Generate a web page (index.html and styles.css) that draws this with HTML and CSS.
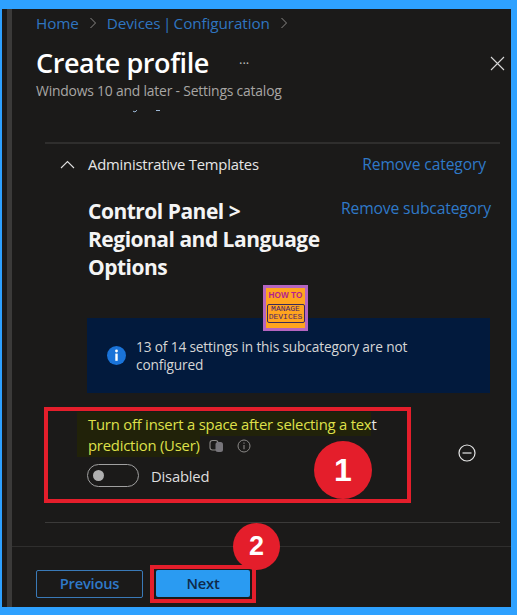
FILE: index.html
```html
<!DOCTYPE html>
<html lang="en">
<head>
<meta charset="utf-8">
<title>Create profile</title>
<link rel="stylesheet" href="styles.css">
</head>
<body>
<div class="frame">
  <div class="panel">
    <header class="header">
      <nav class="crumbs">
        <a>Home</a>
        <svg class="chev" width="8" height="12" viewBox="0 0 8 12"><path d="M1.5 1l5 5-5 5" fill="none" stroke="#8a8886" stroke-width="1"/></svg>
        <a>Devices | Configuration</a>
        <svg class="chev" width="8" height="12" viewBox="0 0 8 12"><path d="M1.5 1l5 5-5 5" fill="none" stroke="#8a8886" stroke-width="1"/></svg>
      </nav>
      <div class="title-row">
        <h1>Create profile</h1>
        <span class="more">···</span>
        <svg class="close" width="15" height="15" viewBox="0 0 15 15"><path d="M1 1l13 13M14 1L1 14" stroke="#d8d8d8" stroke-width="1.1" fill="none"/></svg>
      </div>
      <p class="subtitle">Windows 10 and later - Settings catalog</p>
      <svg class="cut-off" width="30" height="4" viewBox="0 0 30 4"><path d="M0 2.2q2 2 4-1M23 1.5h4" fill="none" stroke="#9db8d6" stroke-width="1"/></svg>
    </header>
    <main class="scroll">
      <div class="rule"></div>
      <div class="cat-row">
        <svg class="caret" width="15" height="9" viewBox="0 0 15 9"><path d="M1 8l6.5-6.5L14 8" fill="none" stroke="#e0e0e0" stroke-width="1.1"/></svg>
        <span class="cat-name">Administrative Templates</span>
        <a class="remove-cat">Remove category</a>
      </div>
      <div class="sub-row">
        <h2>Control Panel &gt;<br>Regional and Language<br>Options</h2>
        <a class="remove-sub">Remove subcategory</a>
      </div>
      <div class="info">
        <svg class="info-icon" width="19" height="19" viewBox="0 0 19 19"><circle cx="9.5" cy="9.5" r="9.5" fill="#1a73d8"/><circle cx="9.5" cy="5" r="1.4" fill="#fff"/><rect x="8.3" y="7.6" width="2.4" height="7.2" fill="#fff"/></svg>
        <p>13 of 14 settings in this subcategory are not configured</p>
      </div>
      <div class="setting">
        <div class="setting-main">
          <p class="setting-name"><span class="hl">Turn off insert a space after selecting a tex</span>t<br><span class="hl">prediction (User)</span>
            <svg class="copy" width="15" height="14" viewBox="0 0 15 14"><rect x="1" y="1.5" width="8" height="9.5" rx="2.5" fill="none" stroke="#8a8886" stroke-width="1.1"/><rect x="6.5" y="3" width="7.5" height="10" rx="2.5" fill="#77757a"/></svg>
            <svg class="tip" width="14" height="14" viewBox="0 0 14 14"><circle cx="7" cy="7" r="6" fill="none" stroke="#8a8886"/><path d="M7 6v4.2M7 3.6v1.2" stroke="#8a8886" stroke-width="1.1"/></svg>
          </p>
          <div class="toggle-row">
            <span class="toggle"><span class="knob"></span></span>
            <span class="toggle-label">Disabled</span>
          </div>
        </div>
        <svg class="minus" width="18" height="18" viewBox="0 0 18 18"><circle cx="9" cy="9" r="8" fill="none" stroke="#e6e6e6" stroke-width="1.2"/><path d="M4.5 9h9" stroke="#e6e6e6" stroke-width="1.2"/></svg>
      </div>
      <div class="rule-inner"></div>
    </main>
    <footer class="footer">
      <button class="btn btn-prev">Previous</button>
      <button class="btn btn-next">Next</button>
    </footer>
  </div>

  <div class="logo"><span class="logo-top">HOW TO</span><span class="logo-box">MANAGE<br>DEVICES</span></div>
  <div class="mark mark-one"></div>
  <div class="badge badge-one">1</div>
  <div class="mark mark-two"></div>
  <div class="badge badge-two">2</div>
</div>
</body>
</html>
```
FILE: styles.css
```css
* { box-sizing: border-box; }
html, body { margin: 0; padding: 0; }
body { width: 517px; height: 615px; overflow: hidden; font-family: "Open Sans", "Noto Sans", sans-serif; }
.frame { position: relative; width: 517px; height: 615px; background: #2ea1ff; padding: 9px 6px 8px 2px; }
.panel { height: 598px; background: #1b1a19; border-left: 5px solid #1b1a19; display: flex; flex-direction: column; position: relative; }
.panel::before { content: ""; position: absolute; left: 0; top: 0; bottom: 0; width: 5px; background: #3b3a39; }
.header { padding: 3px 0 0 29px; height: 131px; flex: none; }
.crumbs { display: flex; align-items: center; gap: 10px; height: 21px; font-size: 15.3px; color: #2f75c0; letter-spacing: -0.1px; word-spacing: -1.5px; }
.chev { flex: none; }
.title-row { display: flex; align-items: center; height: 44px; margin-top: 8px; position: relative; }
h1 { margin: 0; font-size: 27px; font-weight: 600; color: #fff; letter-spacing: -0.4px; line-height: 44px; }
.more { margin-left: 30px; color: #bdbdbd; font-size: 13px; line-height: 13px; }
.close { position: absolute; right: 6px; top: 15px; }
.subtitle { margin: -3px 0 0; font-size: 13.9px; line-height: 18px; color: #a8a6a4; letter-spacing: -0.2px; }
.cut-off { display: block; margin: 9px 0 0 97px; }
.scroll { flex: none; height: 383px; padding-left: 38px; padding-right: 11px; }
.rule { height: 2px; background: #2f2e2d; margin-top: 2px; }
.cat-row { display: flex; align-items: center; height: 40px; padding-left: 15px; }
.caret { flex: none; }
.cat-name { margin-left: 13px; font-size: 14.8px; color: #e6e6e6; letter-spacing: -0.2px; }
.remove-cat { margin-left: auto; margin-right: 14px; font-size: 15.6px; color: #2f79c8; letter-spacing: -0.1px; }
.sub-row { display: flex; justify-content: space-between; align-items: flex-start; padding: 13px 9px 0 43px; height: 134px; }
h2 { margin: 0; font-size: 21px; line-height: 28px; font-weight: 700; color: #f4f4f4; letter-spacing: -0.5px; white-space: nowrap; }
.remove-sub { font-size: 15.7px; color: #2f79c8; letter-spacing: -0.15px; }
.info { display: flex; align-items: center; background: #021a3d; height: 75px; margin: 0 10px 0 42px; padding-left: 20px; }
.info-icon { flex: none; }
.info p { margin: 0 0 0 10px; width: 335px; font-size: 13.7px; line-height: 18px; color: #d6d6d6; letter-spacing: -0.15px; }
.setting { display: flex; justify-content: space-between; padding: 21px 24px 0 43px; height: 129px; }
.setting-name { margin: 0; font-size: 14.8px; line-height: 21px; color: #e6e6e6; letter-spacing: -0.2px; white-space: nowrap; }
.hl { color: #dfe04a; background: #212209; padding: 2px 0 2px 11px; margin-left: -11px; }
.copy { margin-left: 6px; vertical-align: -2px; }
.tip { margin-left: 9px; vertical-align: -2px; }
.toggle-row { display: flex; align-items: center; margin: 8px 0 0 -1px; }
.toggle { width: 52px; height: 23px; border: 1px solid #a0a0a0; border-radius: 12px; display: flex; align-items: center; padding-left: 5px; }
.knob { width: 11px; height: 11px; border-radius: 50%; background: #b0b0b0; }
.toggle-label { margin-left: 12px; font-size: 14.8px; color: #dedede; letter-spacing: -0.2px; }
.minus { margin-top: 30px; flex: none; }
.rule-inner { height: 1px; background: #3b3a39; }
.footer { flex: none; border-top: 1px solid #2f2e2d; margin: 23px 0 0 5px; padding: 23px 0 0 24px; display: flex; gap: 13px; }
.btn { width: 107px; height: 28px; border-radius: 2px; font-family: inherit; font-size: 14.7px; font-weight: 600; padding: 0 0 2px; letter-spacing: -0.2px; }
.btn-prev { background: transparent; border: 1px solid #3a7ab8; color: #2f79c8; }
.btn-next { width: 94px; height: 27px; background: #2a9bf2; border: 0; color: #0f2a4a; }
.logo { position: absolute; left: 263px; top: 285px; width: 45px; height: 46px; background: #ffa51f; border: 3px solid #b565c0; display: flex; flex-direction: column; align-items: center; font-family: "Liberation Sans", sans-serif; font-weight: 700; color: #b51f8e; }
.logo-top { font-size: 8.2px; line-height: 12px; margin-top: 2px; white-space: nowrap; letter-spacing: .1px; }
.logo-box { margin-top: 2px; width: 38px; border: 1px solid #3a2a5a; border-radius: 2px; font-family: "Liberation Mono", monospace; font-size: 8px; line-height: 8px; color: #4a1f6a; text-align: center; letter-spacing: 0; padding-bottom: 1px; font-weight: 400; }
.mark { position: absolute; border: 4px solid #e41e2b; }
.mark-one { left: 44px; top: 407px; width: 367px; height: 96px; }
.mark-two { left: 150px; top: 565px; width: 106px; height: 38px; }
.badge { position: absolute; border-radius: 50%; background: #e41e2b; color: #fff; font-family: "Liberation Sans", sans-serif; font-weight: 700; display: flex; align-items: center; justify-content: center; }
.badge-one { left: 314px; top: 441px; width: 58px; height: 58px; font-size: 32px; }
.badge-two { left: 233px; top: 523px; width: 47px; height: 47px; font-size: 27px; }
```
